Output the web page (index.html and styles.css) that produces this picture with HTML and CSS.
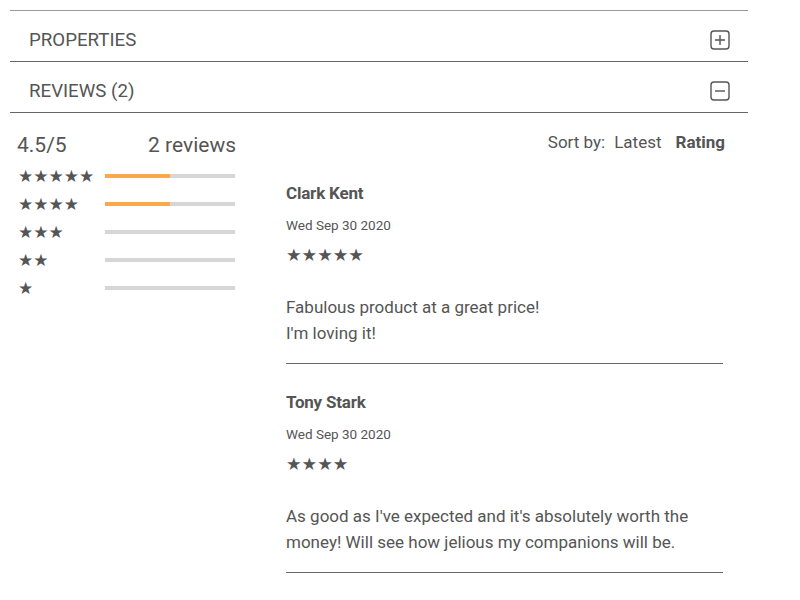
FILE: index.html
```html
<!DOCTYPE html>
<html lang="en">
<head>
    <meta charset="UTF-8">
    <meta name="viewport" content="width=device-width, initial-scale=1.0">
    <title>Product reviews</title>
    <link rel="stylesheet" href="styles.css">
</head>
<body>

    <!-- Accordion -->
    <div class="accordion">
        <div class="acc-item">
            <span>Properties</span>
            <svg class="acc-icon" viewBox="0 0 20 20" width="20" height="20">
                <rect x="1" y="1" width="18" height="18" rx="3" />
                <path d="M5 10h10M10 5v10" />
            </svg>
        </div>
        <div class="acc-item">
            <span>Reviews (2)</span>
            <svg class="acc-icon" viewBox="0 0 20 20" width="20" height="20">
                <rect x="1" y="1" width="18" height="18" rx="3" />
                <path d="M5 10h10" />
            </svg>
        </div>
    </div>

    <!-- Reviews -->
    <div class="reviews">
        <div class="summary">
            <div class="summary-head">
                <span>4.5/5</span>
                <span>2 reviews</span>
            </div>
            <div class="rating-row">
                <span class="stars">★★★★★</span>
                <div class="bar"><div class="bar-fill" style="width: 50%"></div></div>
            </div>
            <div class="rating-row">
                <span class="stars">★★★★</span>
                <div class="bar"><div class="bar-fill" style="width: 50%"></div></div>
            </div>
            <div class="rating-row">
                <span class="stars">★★★</span>
                <div class="bar"><div class="bar-fill" style="width: 0%"></div></div>
            </div>
            <div class="rating-row">
                <span class="stars">★★</span>
                <div class="bar"><div class="bar-fill" style="width: 0%"></div></div>
            </div>
            <div class="rating-row">
                <span class="stars">★</span>
                <div class="bar"><div class="bar-fill" style="width: 0%"></div></div>
            </div>
        </div>

        <div class="review-list">
            <div class="sort">
                <span>Sort by:</span>
                <span>Latest</span>
                <span class="active">Rating</span>
            </div>

            <div class="review">
                <div class="review-name">Clark Kent</div>
                <div class="review-date">Wed Sep 30 2020</div>
                <div class="review-stars">★★★★★</div>
                <p class="review-text">Fabulous product at a great price!<br>I'm loving it!</p>
            </div>

            <div class="review">
                <div class="review-name">Tony Stark</div>
                <div class="review-date">Wed Sep 30 2020</div>
                <div class="review-stars">★★★★</div>
                <p class="review-text">As good as I've expected and it's absolutely worth the money! Will see how jelious my companions will be.</p>
            </div>
        </div>
    </div>

</body>
</html>
```

FILE: styles.css
```css
:root {
    --text: #555;
    --line: #666;
    --bar: #d6d6d6;
    --orange: #f9a84a;
}

* {
    margin: 0;
    padding: 0;
    box-sizing: border-box;
}

body {
    font-family: Roboto, 'Liberation Sans', sans-serif;
    color: var(--text);
    background: #fff;
}

.accordion {
    margin: 10px 0 0 10px;
    width: 738px;
    border-top: 1px solid #999;
}

.acc-item {
    height: 51px;
    border-bottom: 1px solid var(--line);
    display: flex;
    align-items: center;
    justify-content: space-between;
    padding: 7px 18px 0 19px;
    font-size: 18.7px;
    text-transform: uppercase;
}

.acc-icon {
    fill: none;
    stroke: var(--text);
    stroke-width: 1.4;
}

.reviews {
    display: flex;
    padding: 20px 0 0 17px;
}

.summary {
    width: 219px;
    margin-right: 50px;
}

.summary-head {
    display: flex;
    justify-content: space-between;
    font-size: 21px;
    line-height: 24px;
    margin-bottom: 5px;
}

.rating-row {
    display: flex;
    align-items: center;
    height: 28px;
}

.stars,
.review-stars {
    font-family: 'DejaVu Sans', sans-serif;
}

.stars {
    width: 88px;
    padding-left: 1px;
    font-size: 17px;
    line-height: 28px;
}

.bar {
    width: 130px;
    height: 4px;
    background: var(--bar);
}

.bar-fill {
    height: 100%;
    background: var(--orange);
}

.review-list {
    width: 437px;
}

.sort {
    display: flex;
    justify-content: flex-end;
    gap: 9px;
    font-size: 17px;
    line-height: 20px;
    margin: -1px -2px 31px 0;
}

.sort .active {
    font-weight: bold;
    margin-left: 5px;
}

.review {
    border-bottom: 1px solid var(--line);
    padding-bottom: 17px;
    margin-bottom: 28px;
}

.review-name {
    font-size: 17px;
    font-weight: bold;
    line-height: 20px;
    letter-spacing: -0.2px;
}

.review-date {
    font-size: 13.5px;
    line-height: 16px;
    margin-top: 14px;
}

.review-stars {
    font-size: 17.4px;
    line-height: 20px;
    margin-top: 12px;
}

.review-text {
    font-size: 17px;
    line-height: 26px;
    margin-top: 29px;
}
```
